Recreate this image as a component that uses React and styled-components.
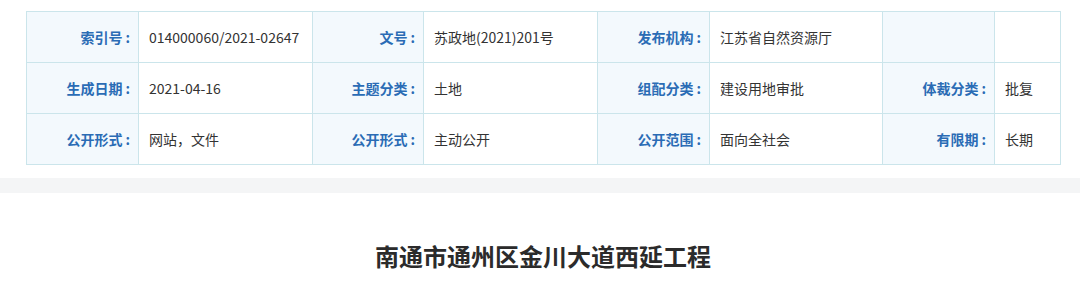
import React from "react";
import styled, { createGlobalStyle } from "styled-components";

const Global = createGlobalStyle`
  html, body { margin: 0; padding: 0; background: #ffffff; }
  body { font-family: "Noto Sans CJK SC", "Noto Sans", sans-serif; }
`;

const Page = styled.div`
  width: 1080px;
  height: 291px;
  overflow: hidden;
  display: flex;
  flex-direction: column;
`;

const InfoWrap = styled.section`
  padding: 11px 0 0 26px;
`;

const Grid = styled.div`
  display: grid;
  grid-template-columns: 111px 173px 110px 173px 111px 172px 111px 65px;
  grid-auto-rows: 50px;
  gap: 1px;
  padding: 1px;
  width: max-content;
  background: #cbe5eb;
`;

const Cell = styled.div`
  display: flex;
  align-items: center;
  font-size: 14px;
  line-height: 1;
  white-space: nowrap;
  ${(p) =>
    p.$label
      ? `
    justify-content: flex-end;
    padding-right: 8px;
    background: #f3f9fd;
    color: #2a6cb5;
    font-weight: 700;
  `
      : `
    justify-content: flex-start;
    padding-left: 10px;
    background: #ffffff;
    color: #333333;
    font-weight: 400;
  `}
`;

const Colon = styled.span`
  margin-left: 3px;
`;

const Band = styled.div`
  margin-top: 13px;
  height: 15px;
  background: #f4f5f6;
`;

const Title = styled.h1`
  margin: 45px 0 0;
  text-align: center;
  font-size: 24px;
  line-height: 36px;
  font-weight: 700;
  color: #2b2b2b;
  padding-left: 6px;
`;

const rows = [
  [
    ["索引号", "014000060/2021-02647"],
    ["文号", "苏政地(2021)201号"],
    ["发布机构", "江苏省自然资源厅"],
    ["", ""],
  ],
  [
    ["生成日期", "2021-04-16"],
    ["主题分类", "土地"],
    ["组配分类", "建设用地审批"],
    ["体裁分类", "批复"],
  ],
  [
    ["公开形式", "网站，文件"],
    ["公开形式", "主动公开"],
    ["公开范围", "面向全社会"],
    ["有限期", "长期"],
  ],
];

export default function App() {
  return (
    <Page>
      <Global />
      <InfoWrap>
        <Grid>
          {rows.map((row, ri) =>
            row.map(([label, value], ci) => (
              <React.Fragment key={`${ri}-${ci}`}>
                <Cell $label>
                  {label}
                  {label && <Colon>:</Colon>}
                </Cell>
                <Cell>{value}</Cell>
              </React.Fragment>
            ))
          )}
        </Grid>
      </InfoWrap>
      <Band />
      <Title>南通市通州区金川大道西延工程</Title>
    </Page>
  );
}
